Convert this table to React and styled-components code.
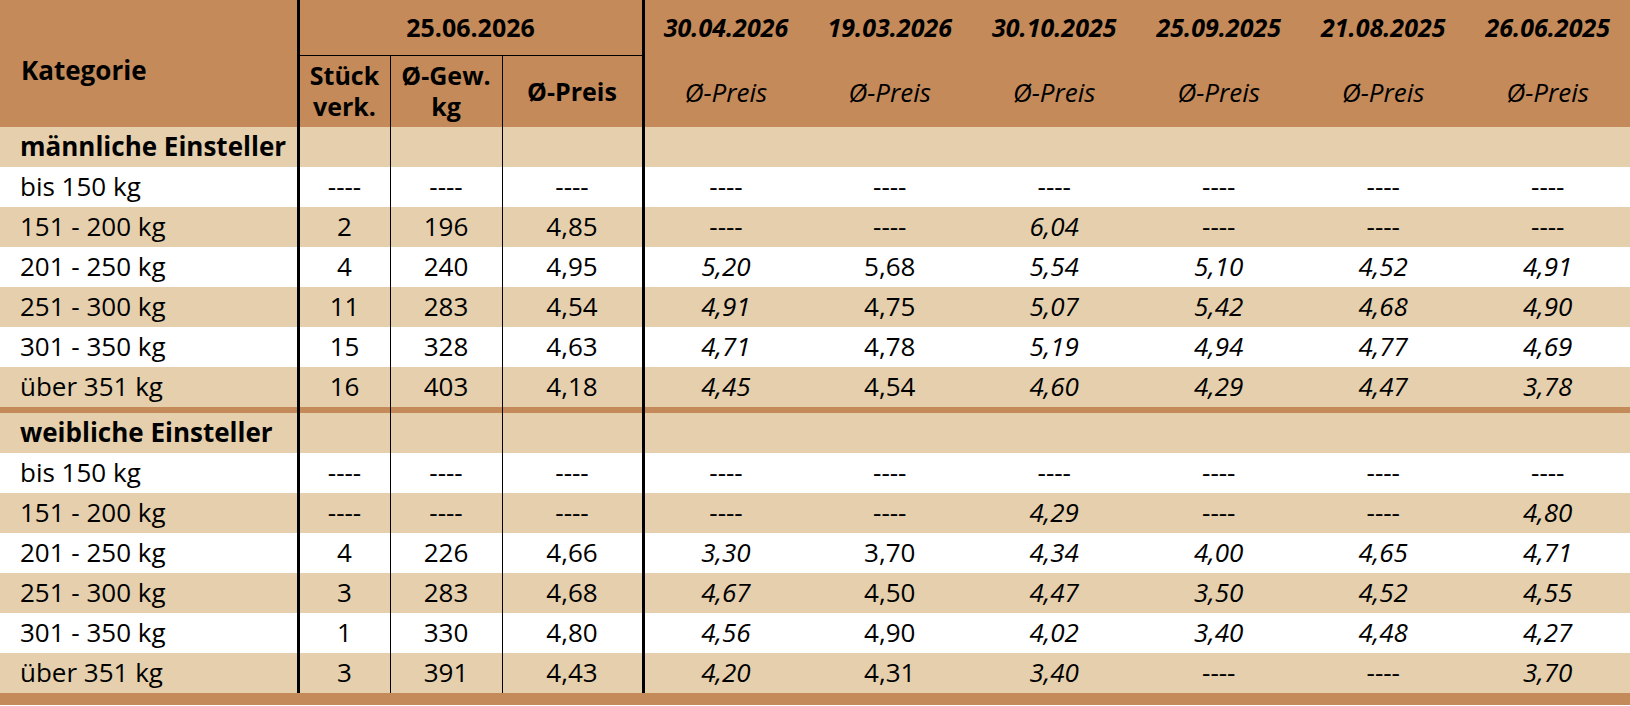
import React from 'react';
import styled, { createGlobalStyle } from 'styled-components';

const GlobalStyle = createGlobalStyle`
  html, body {
    margin: 0;
    padding: 0;
    background: #ffffff;
  }
  body {
    font-family: "Open Sans", "DejaVu Sans", sans-serif;
    color: #000;
  }
`;

const BROWN = '#c48a59';
const BEIGE = '#e5cfac';

const dates = ['30.04.2026', '19.03.2026', '30.10.2025', '25.09.2025', '21.08.2025', '26.06.2025'];

// columns whose values are printed upright (not italic)
const uprightCols = [1];

const sections = [
  {
    title: 'männliche Einsteller',
    rows: [
      ['bis 150 kg', '----', '----', '----', ['----', '----', '----', '----', '----', '----']],
      ['151 - 200 kg', '2', '196', '4,85', ['----', '----', '6,04', '----', '----', '----']],
      ['201 - 250 kg', '4', '240', '4,95', ['5,20', '5,68', '5,54', '5,10', '4,52', '4,91']],
      ['251 - 300 kg', '11', '283', '4,54', ['4,91', '4,75', '5,07', '5,42', '4,68', '4,90']],
      ['301 - 350 kg', '15', '328', '4,63', ['4,71', '4,78', '5,19', '4,94', '4,77', '4,69']],
      ['über 351 kg', '16', '403', '4,18', ['4,45', '4,54', '4,60', '4,29', '4,47', '3,78']],
    ],
  },
  {
    title: 'weibliche Einsteller',
    rows: [
      ['bis 150 kg', '----', '----', '----', ['----', '----', '----', '----', '----', '----']],
      ['151 - 200 kg', '----', '----', '----', ['----', '----', '4,29', '----', '----', '4,80']],
      ['201 - 250 kg', '4', '226', '4,66', ['3,30', '3,70', '4,34', '4,00', '4,65', '4,71']],
      ['251 - 300 kg', '3', '283', '4,68', ['4,67', '4,50', '4,47', '3,50', '4,52', '4,55']],
      ['301 - 350 kg', '1', '330', '4,80', ['4,56', '4,90', '4,02', '3,40', '4,48', '4,27']],
      ['über 351 kg', '3', '391', '4,43', ['4,20', '4,31', '3,40', '----', '----', '3,70']],
    ],
  },
];

const Table = styled.table`
  width: 1630px;
  table-layout: fixed;
  border-collapse: collapse;
  border-spacing: 0;
  font-size: 26px;
  line-height: 1.2;
`;

const Col = styled.col`
  width: ${(p) => p.$w}px;
`;

const HeadRow = styled.tr`
  background: ${BROWN};
  height: ${(p) => p.$h}px;
`;

const HeadCell = styled.th`
  padding: 0;
  font-weight: 700;
  font-size: 25px;
  font-style: ${(p) => (p.$italic ? 'italic' : 'normal')};
  text-align: center;
  vertical-align: middle;
  line-height: 31px;
  white-space: nowrap;
  border-left: ${(p) => (p.$thick ? '3px solid #000' : p.$thin ? '1px solid #000' : 'none')};
  border-bottom: ${(p) => (p.$under ? '1px solid #000' : 'none')};
`;

const KatHead = styled(HeadCell)`
  text-align: left;
  font-size: 26px;
  padding: 14px 0 0 21px;
`;

const SubLabel = styled(HeadCell)`
  font-weight: 400;
  font-style: italic;
  font-size: 26px;
  padding-top: 2px;
`;

const Row = styled.tr`
  height: 40px;
  background: ${(p) => (p.$shade ? BEIGE : '#ffffff')};
`;

const Cell = styled.td`
  padding: 0;
  text-align: center;
  vertical-align: middle;
  white-space: nowrap;
  font-style: ${(p) => (p.$italic ? 'italic' : 'normal')};
  border-left: ${(p) => (p.$thick ? '3px solid #000' : p.$thin ? '1px solid #000' : 'none')};
`;

const LabelCell = styled(Cell)`
  text-align: left;
  padding-left: 20px;
  font-weight: ${(p) => (p.$bold ? 700 : 400)};
`;

const BandRow = styled.tr`
  height: ${(p) => p.$h}px;
  background: ${BROWN};
`;

const BandCell = styled.td`
  padding: 0;
  height: ${(p) => p.$h}px;
  border-left: ${(p) => (p.$thick ? '3px solid #000' : p.$thin ? '1px solid #000' : 'none')};
`;

const lineFor = (i) => ({ $thick: i === 1 || i === 4, $thin: i === 2 || i === 3 });

const SeparatorRow = () => (
  <BandRow $h={6}>
    {Array.from({ length: 10 }).map((_, i) => (
      <BandCell key={i} $h={6} {...lineFor(i)} />
    ))}
  </BandRow>
);

const Section = ({ title, rows }) => (
  <>
    <Row $shade>
      <LabelCell $bold>{title}</LabelCell>
      {Array.from({ length: 9 }).map((_, i) => (
        <Cell key={i} {...lineFor(i + 1)} />
      ))}
    </Row>
    {rows.map(([label, count, weight, price, history], r) => (
      <Row key={label} $shade={r % 2 === 1}>
        <LabelCell>{label}</LabelCell>
        <Cell $thick>{count}</Cell>
        <Cell $thin>{weight}</Cell>
        <Cell $thin>{price}</Cell>
        {history.map((v, c) => (
          <Cell key={c} $thick={c === 0} $italic={v !== '----' && !uprightCols.includes(c)}>
            {v}
          </Cell>
        ))}
      </Row>
    ))}
  </>
);

export default function App() {
  return (
    <>
      <GlobalStyle />
      <Table>
        <colgroup>
          <Col $w={298} />
          <Col $w={92} />
          <Col $w={112} />
          <Col $w={141} />
          {dates.map((d) => (
            <Col key={d} $w={164.5} />
          ))}
        </colgroup>
        <thead>
          <HeadRow $h={55}>
            <KatHead rowSpan={2}>Kategorie</KatHead>
            <HeadCell colSpan={3} $thick $under>
              25.06.2026
            </HeadCell>
            {dates.map((d, i) => (
              <HeadCell key={d} $italic $thick={i === 0}>
                {d}
              </HeadCell>
            ))}
          </HeadRow>
          <HeadRow $h={72}>
            <HeadCell $thick>
              Stück
              <br />
              verk.
            </HeadCell>
            <HeadCell $thin>
              Ø-Gew.
              <br />
              kg
            </HeadCell>
            <HeadCell $thin>Ø-Preis</HeadCell>
            {dates.map((d, i) => (
              <SubLabel key={d} $thick={i === 0}>
                Ø-Preis
              </SubLabel>
            ))}
          </HeadRow>
        </thead>
        <tbody>
          <Section {...sections[0]} />
          <SeparatorRow />
          <Section {...sections[1]} />
          <BandRow $h={12}>
            <BandCell colSpan={10} $h={12} />
          </BandRow>
        </tbody>
      </Table>
    </>
  );
}
